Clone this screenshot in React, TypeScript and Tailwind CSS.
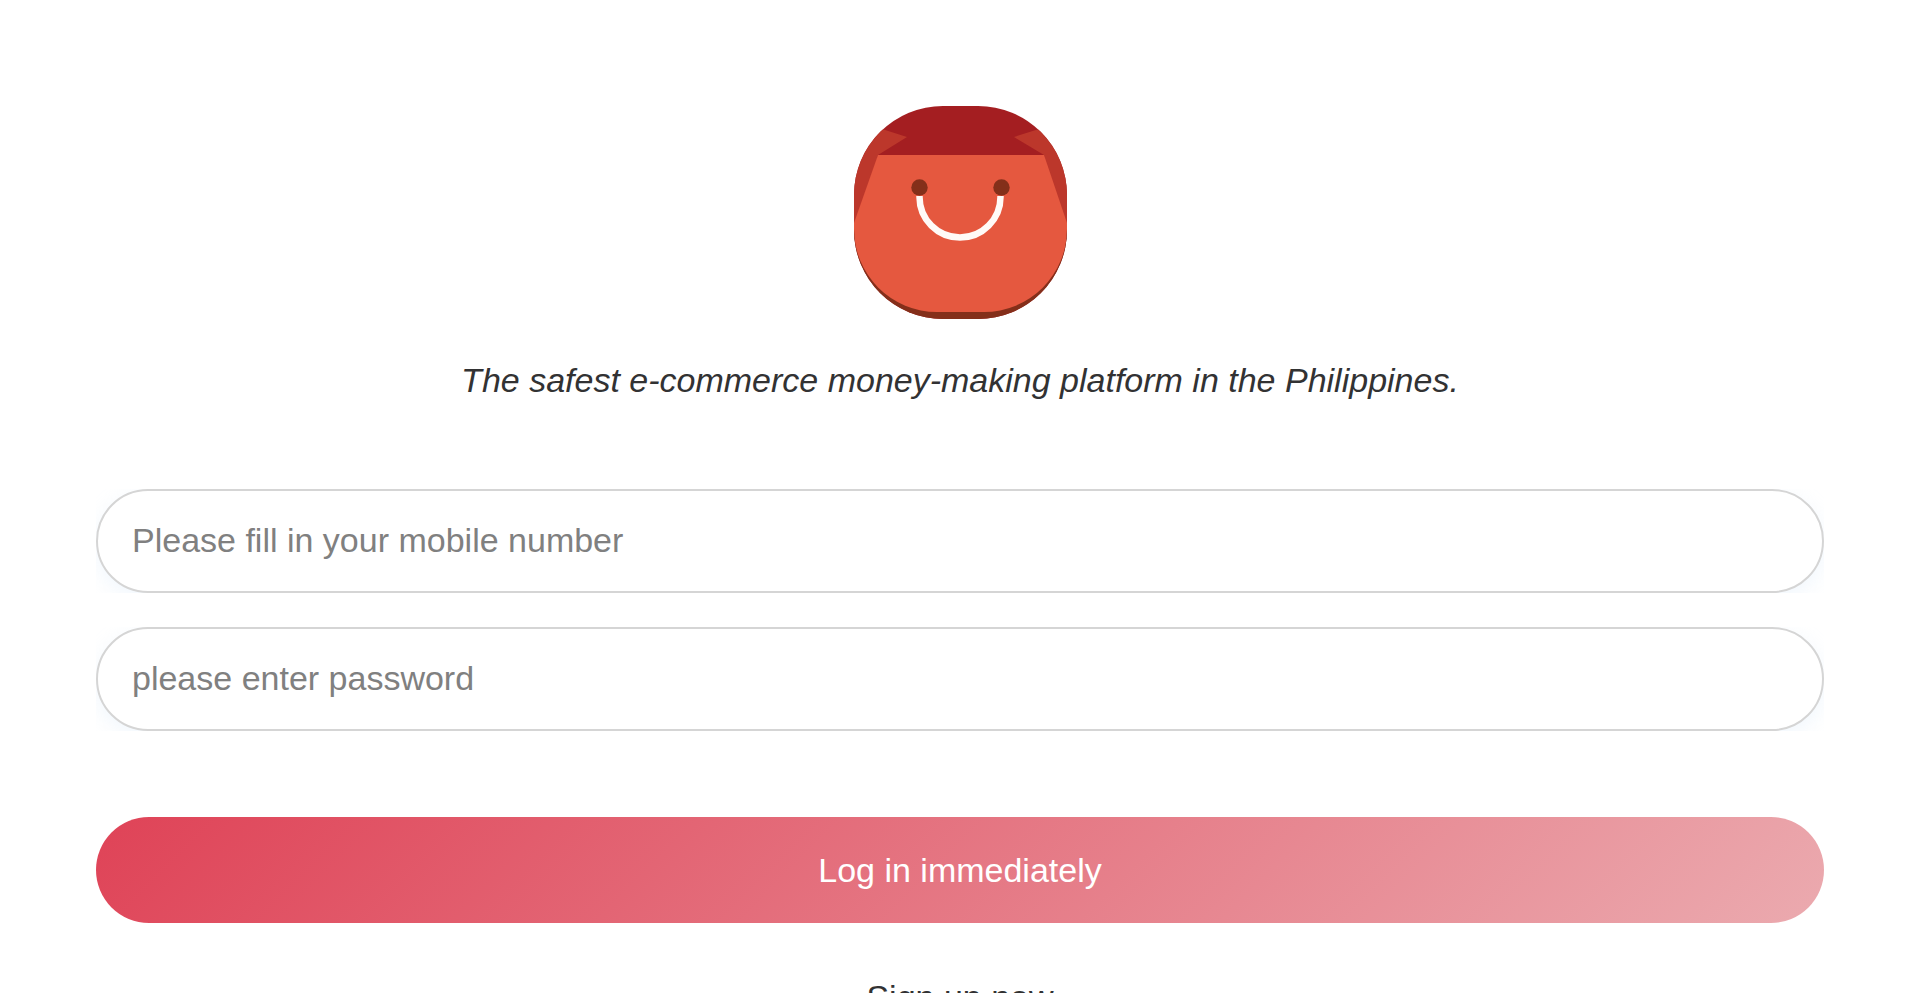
import { useState } from "react";
import type { FormEvent } from "react";

const fields = [
  { id: "mobile", type: "tel", placeholder: "Please fill in your mobile number" },
  { id: "password", type: "password", placeholder: "please enter password" },
];

const Logo = () => (
  <svg className="w-[213px] h-[213px]" viewBox="0 0 213 213" role="img" aria-label="Shopping bag">
    <defs>
      <clipPath id="badge">
        <rect width="213" height="213" rx="89" />
      </clipPath>
      <clipPath id="bag">
        <rect y="-7" width="213" height="213" rx="83" />
      </clipPath>
    </defs>
    <g clipPath="url(#badge)">
      <rect width="213" height="213" fill="#a41e21" />
      {/* Bag sides */}
      <path d="M0 14 L28 23 L53 31 L24 49 L14 120 H0 Z" fill="#bc372b" />
      <path d="M213 14 L185 23 L160 31 L190 49 L199 120 H213 Z" fill="#bc372b" />
      <path d="M0 117 H213 V213 H0 Z" fill="#842f1a" />
      {/* Front */}
      <path clipPath="url(#bag)" d="M24 49 H190 L213 117 V213 H0 V117 Z" fill="#e5583f" />
    </g>
    {/* Handle */}
    <path d="M65.500 90 V91 A40.500 40.500 0 0 0 146.500 91 V90" fill="none" stroke="#fffaf7" strokeWidth="6.500" />
    <circle cx="65.500" cy="81.500" r="8.200" fill="#842f1a" />
    <circle cx="147.500" cy="81.500" r="8.200" fill="#842f1a" />
  </svg>
);

const App = () => {
  const [values, setValues] = useState<Record<string, string>>({});

  const handleSubmit = (e: FormEvent) => {
    e.preventDefault();
  };

  return (
    <main className="min-h-screen bg-white px-[5%] pt-[106px] pb-16 font-['Liberation_Sans',Arial,sans-serif] text-[34px] leading-[40px] text-[#323233]">
      <div className="flex flex-col items-center">
        <Logo />
        <p className="mt-[41px] text-center italic">
          The safest e-commerce money-making platform in the Philippines.
        </p>
      </div>

      <form onSubmit={handleSubmit} className="mt-[89px] flex flex-col">
        <div className="flex flex-col gap-[34px]">
          {fields.map(field => (
            <div key={field.id} className="overflow-hidden">
              <input
                id={field.id}
                type={field.type}
                aria-label={field.placeholder}
                placeholder={field.placeholder}
                value={values[field.id] || ""}
                onChange={e => setValues({ ...values, [field.id]: e.target.value })}
                className="block w-full h-[104px] rounded-full border-2 border-[#d5d5d5] bg-white px-[34px] pb-[2px] shadow-[0_6px_20px_rgba(190,220,245,0.22)] outline-none placeholder:text-[#808080]"
              />
            </div>
          ))}
        </div>

        <button
          type="submit"
          className="mt-[86px] h-[106px] w-full cursor-pointer rounded-full bg-[linear-gradient(135deg,#df4357,#ebaaaf)] text-white"
        >
          Log in immediately
        </button>
      </form>

      <div className="mt-[54px] text-center">
        <a href="#signup">Sign up now</a>
      </div>
    </main>
  );
};

export default App;
